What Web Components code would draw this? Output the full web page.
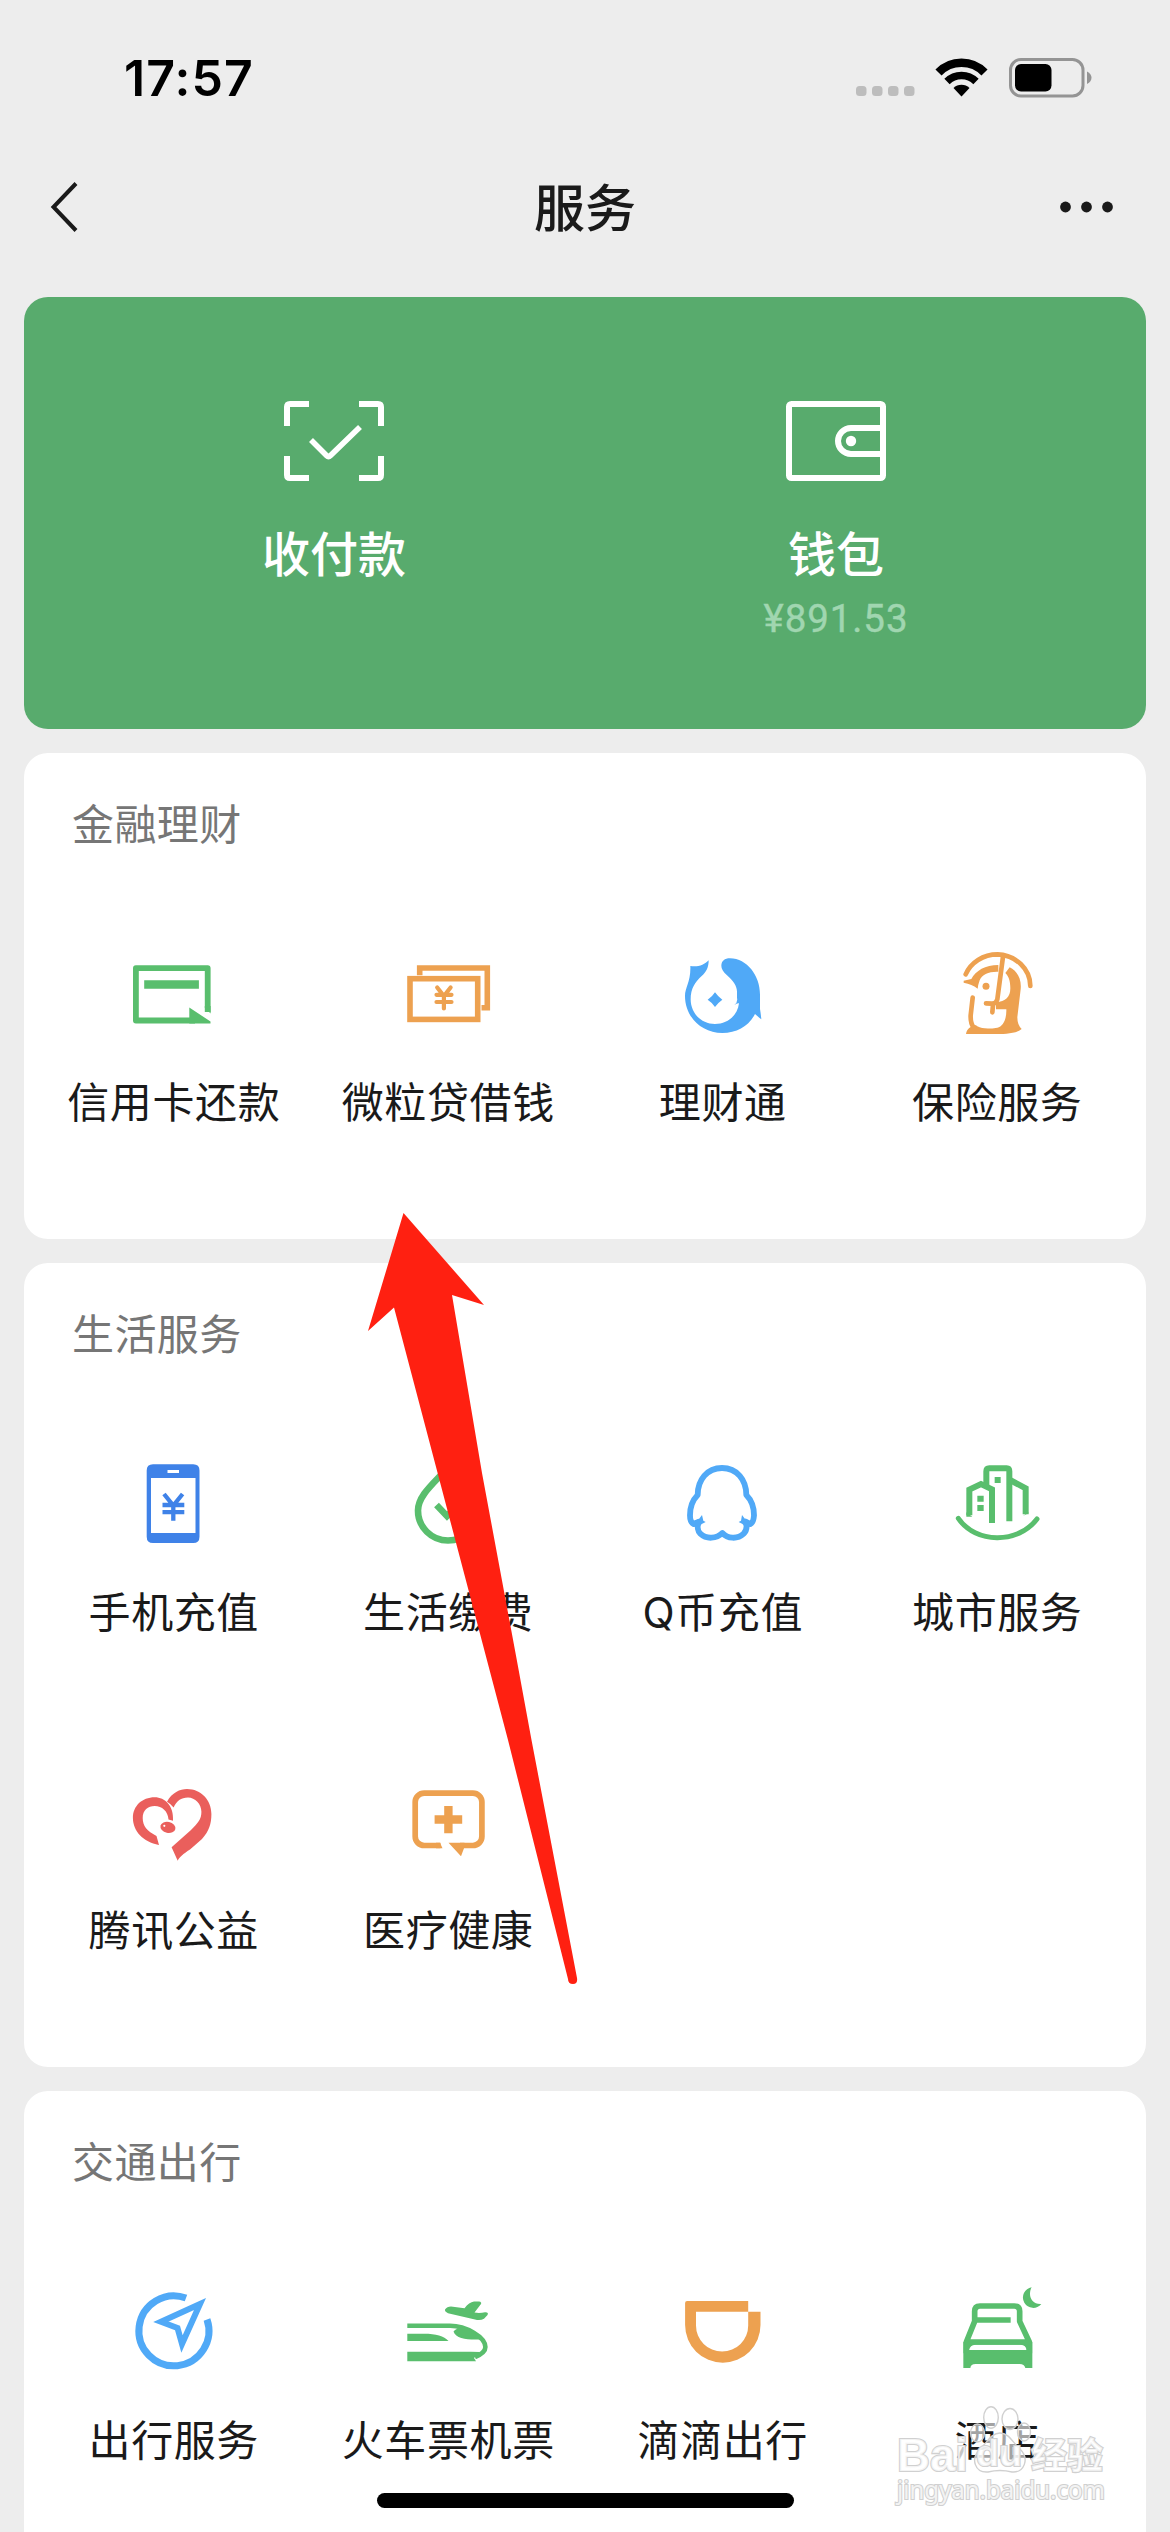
<!DOCTYPE html>
<html lang="zh-CN">
<head>
<meta charset="utf-8">
<title>服务</title>
<style>
  html, body { margin: 0; background: #ededed; }
  body { width: 1170px; height: 2532px; overflow: hidden; }
</style>
</head>
<body>
<service-page>
  <status-bar time="17:57"></status-bar>
  <nav-bar>服务</nav-bar>
  <pay-panel>
    <pay-entry icon="scan">收付款</pay-entry>
    <pay-entry icon="wallet" note="¥891.53">钱包</pay-entry>
  </pay-panel>
  <service-section heading="金融理财">
    <service-item icon="card">信用卡还款</service-item>
    <service-item icon="loan">微粒贷借钱</service-item>
    <service-item icon="fund">理财通</service-item>
    <service-item icon="insurance">保险服务</service-item>
  </service-section>
  <service-section heading="生活服务">
    <service-item icon="phone">手机充值</service-item>
    <service-item icon="drop">生活缴费</service-item>
    <service-item icon="penguin">Q币充值</service-item>
    <service-item icon="city">城市服务</service-item>
    <service-item icon="heart">腾讯公益</service-item>
    <service-item icon="medical">医疗健康</service-item>
  </service-section>
  <service-section heading="交通出行">
    <service-item icon="compass">出行服务</service-item>
    <service-item icon="train">火车票机票</service-item>
    <service-item icon="didi">滴滴出行</service-item>
    <service-item icon="hotel">酒店</service-item>
  </service-section>
  <home-indicator slot="overlay"></home-indicator>
  <pointer-arrow slot="overlay"></pointer-arrow>
  <corner-watermark slot="overlay"></corner-watermark>
</service-page>

<script>
const GREEN = '#59be6d', ORANGE = '#eda150', BLUE = '#50a9f7', ROYAL = '#3f82e8', RED = '#ea5f5c';

const ICONS = {
  scan: ['0 0 104 84', `<g fill="none" stroke="#fff" stroke-width="6"><path d="M27 5H8Q5 5 5 8V27M77 5H96Q99 5 99 8V27M27 79H8Q5 79 5 76V57M77 79H96Q99 79 99 76V57"/><path d="M29 41L44.500 56.500Q46.500 58.500 48.500 56.500L78 28" stroke-width="5.600"/></g>`],
  wallet: ['0 0 104 84', `<g fill="none" stroke="#fff" stroke-width="6"><rect x="5" y="5" width="94" height="74" rx="2.500"/><path d="M99 29H67A13 13 0 0 0 67 55H99"/></g><circle cx="67" cy="42" r="5.200" fill="#fff"/>`],
  card: ['0 0 96 96', `<path d="M82.700 66V22.200H10.900V74.500H70" fill="none" stroke="${GREEN}" stroke-width="5.800" stroke-linejoin="round"/><path d="M19.200 34.300H73.900V42.700H19.200ZM64.300 61.500L85.500 75.500V77.400H64.300ZM79.800 62L85.600 67.500V60H79.800Z" fill="${GREEN}"/>`],
  loan: ['0 0 96 96', `<g fill="none" stroke="${ORANGE}" stroke-width="5.600"><rect x="10" y="32.700" width="67.700" height="40.700"/><path d="M19.700 29.200V22H87.300V61.800H81.500"/><path d="M37.200 41.500L43.900 50L50.600 41.500M36.500 48.800H51.500M36.500 56H51.500M43.900 50V62.500" stroke-width="4.200" stroke-linecap="round"/></g>`],
  fund: ['13 18 288 288', `<path fill="${BLUE}" d="M62 78C84 82 104 75 117 61C117 82 110 96 96 108C76 126 63 146 63 178C63 220 95 252 136 252C174 252 204 226 208 190Q202 189 194 195Q205 186 202 174V155C202 138 190 122 172 106C160 95 155 86 155 77C155 63 165 55 181 55C232 56 271 106 271 164V207Q273 218 275 238Q265 230 256 222C238 258 202 279 158 279C95 279 46 230 46 168C46 143 64 124 62 78Z"/><path fill="${BLUE}" d="M136 157Q145 170 158 179Q145 188 136 201Q128 188 114 179Q128 170 136 157Z"/>`],
  insurance: ['836 18 288 288', `<g fill="none" stroke="${ORANGE}" stroke-width="14" stroke-linecap="round"><path d="M886 103C901 68 938 43 982 43C1036 45 1080 87 1080 138"/><path d="M998 50L981 178Q977 192 964 191L947 190M968 195L966 217" stroke-width="14"/><path d="M907 173L901 226Q900 249 910 263"/></g><path fill="${ORANGE}" d="M880 122L903 117C916 92 945 75 984 75V95C956 94 934 103 928 121Q923 135 922 146C909 136 898 131 880 128ZM1018 82C1042 94 1054 118 1051 148L1041 232Q1041 255 1054 267C1036 282 1000 282 970 282H887Q888 268 902 260Q913 251 921 259C936 267 956 267 981 263C998 260 1009 238 1008 208H977V187C1006 184 1020 172 1020 145C1020 123 1015 108 1005 99Z"/><circle cx="947" cy="139" r="10.500" fill="${ORANGE}"/>`],
  phone: ['0 0 96 96', `<path fill="${ROYAL}" fill-rule="evenodd" d="M28 8.300H68.200Q74.500 8.300 74.500 14.600V80.700Q74.500 87 68.200 87H28Q21.700 87 21.700 80.700V14.600Q21.700 8.300 28 8.300ZM26 22V77H70.500V22ZM42.500 14V17H54V14Z"/><path d="M39 38L48.300 49.500L57.600 38M37.500 49H59.300M37.500 56.200H59.300M48.300 49V64.700" fill="none" stroke="${ROYAL}" stroke-width="4.300"/>`],
  drop: ['0 0 96 96', `<g fill="none" stroke="${GREEN}" stroke-width="6.600"><path d="M48 11C38 24 18 38 18 54.500A30 30 0 0 0 78 54.500C78 38 58 24 48 11Z"/><path d="M36.500 49L47 60L62 45"/></g>`],
  penguin: ['13 18 288 288', `<g fill="none" stroke="${BLUE}" stroke-width="17.500" stroke-linejoin="round"><path d="M84 135C84 90 112 54 157 54C202 54 230 90 230 135C244 149 253 171 253 196C252 210 249 219 242 222L228 215C233 230 229 244 222 251C203 269 173 266 158 249C141 266 111 269 92 251C85 244 81 230 88 215L72 222C65 219 61 210 61 196C61 171 70 149 84 135Z"/></g><path fill="${BLUE}" d="M65 216L88 207L97 195L101 212L108 216C94 222 88 228 84 241L75 230ZM248 216L226 207L217 195L214 212L207 216C221 222 226 228 230 241L240 230Z"/>`],
  city: ['836 18 288 288', `<g fill="none" stroke="${GREEN}" stroke-width="18"><path d="M864 205C915 281 1043 283 1100 207" stroke-linecap="round" stroke-width="15"/><path d="M948 106V64Q948 55 957 55H1009Q1017 55 1017 64V214"/><path d="M897 196V119L932 102L965 118V219"/><path d="M1019 90L1066 115V193"/></g><path fill="${GREEN}" d="M973 81H991V99H973ZM921 137H940V155H921ZM921 165H940V183H921ZM888 187L906 200H888ZM1058 198L1074 186V190Z"/>`],
  heart: ['0 0 96 96', `<g fill="${RED}"><path d="M42 27.700C47 18.500 55 15 62 15C76 15 86.400 26 86.400 40C86.400 50 84 57 77 65L65 75.500C58 80 54.500 83 52.700 86.700L46.600 73.300L66 56C73 49 76.500 45 76.400 37.700C76.400 30 70 23.500 63 23.500C56 23.500 51.500 27 48.600 33.500Q46 30 42 27.700Z"/><path d="M48 46.700C49 32 40 23.300 29.700 23.300C17 23.300 7.900 32 7.900 44C8 57 18 68 34 71L31.500 62C22 57 17.700 52 17.700 44C17.700 36 23 31.900 29.700 31.900C37 32 43 37 43.500 45.500Z"/><ellipse cx="43" cy="53.400" rx="7.600" ry="5.500" transform="rotate(12 43 53)"/></g><circle cx="39.300" cy="51.800" r="1.100" fill="#fff"/>`],
  medical: ['0 0 96 96', `<path d="M40.500 71.500H24.200A9 9 0 0 1 15.200 62.500V28.100A9 9 0 0 1 24.200 19.100H72.900A9 9 0 0 1 81.900 28.100V62.500A9 9 0 0 1 72.900 71.500H60" fill="none" stroke="${ORANGE}" stroke-width="5.700"/><path fill="${ORANGE}" d="M44.200 32H52.600V41.300H62.200V49.700H52.600V59.300H44.200V49.700H34.600V41.300H44.200ZM48.500 68.700H64.500L64 74.300L61 82.300ZM40 68.700L42.500 74.300H36V68.700Z"/>`],
  compass: ['0 0 96 96', `<g fill="none" stroke="${BLUE}"><path d="M61 14A35 35 0 1 0 82 35.500" stroke-width="7"/><path d="M75 20L36 37.700L52.500 44L57 60Z" stroke-width="6"/></g>`],
  train: ['0 0 96 96', `<path d="M7.300 41.800H50C66 41.800 85.400 53 85.400 63C85.400 68.500 80 71 75 73" fill="none" stroke="${GREEN}" stroke-width="4.600"/><path fill="${GREEN}" d="M7.300 49.700H24C36 49.700 44 52 48.500 57H7.300ZM7.300 67.700H71L80 68L74 74L76 77.200H7.300ZM55 46Q60 42 66 44Q74 48 80 55.500C68 56 56 55 53.500 47.500ZM45 25.600Q47 22.500 51 22.400L64.500 24.200Q69 18.300 74 17.500H79Q82 18 81 20L74.500 28.600Q80 29.500 85 28.200Q89 28 87.500 31L84 34.700Q80 37 75 35.400L48 29.200Q44.500 27.700 45 25.600Z"/>`],
  didi: ['0 0 96 96', `<path fill="${ORANGE}" d="M13.100 16.900H74.200V27.700H22V41.500A26.100 26.100 0 0 0 74.200 41.500V27.700H86.500V41A37.700 37.700 0 0 1 11.100 41V18.900Q11.100 16.900 13.100 16.900Z"/>`],
  hotel: ['206 42 288 288', `<g fill="none" stroke="${GREEN}" stroke-width="17"><path d="M258 250V216L283 154V124Q283 108 299 108H402Q418 108 418 124V154L447 216V250M283 150H391M262 216H443" stroke-linejoin="round"/></g><path fill="${GREEN}" fill-rule="evenodd" d="M249 216H456V294H435Q432 282 418 282H286Q271 282 270 294H249ZM266 240H439Q437 225 421 224H285Q269 225 266 240ZM454 52A31 31 0 1 0 483 102C462 104 449 88 449 72C449 64 451 57 454 52Z"/>`]
};

const define = (name, render) => customElements.define(name, class extends HTMLElement {
  constructor() { super(); this.attachShadow({ mode: 'open' }); }
  connectedCallback() { this.shadowRoot.innerHTML = render(this); }
});

define('line-icon', el => {
  const [box, art] = ICONS[el.getAttribute('name')];
  return `<style>:host{display:block;flex:none}svg{display:block;width:100%;height:100%}</style><svg viewBox="${box}" aria-hidden="true">${art}</svg>`;
});

define('service-page', () => `<style>
  :host{display:block;position:relative;width:1170px;height:2532px;overflow:hidden;background:#ededed;color:#1a1a1a;font-family:Inter,"Noto Sans CJK SC",sans-serif}
  main{display:flex;flex-direction:column}
</style><main><slot></slot></main><slot name="overlay"></slot>`);

define('status-bar', el => `<style>
  :host{display:flex;box-sizing:border-box;height:141px;padding:15px 74px 0 124px;align-items:center;justify-content:space-between;color:#000}
  time{font:600 50px/60px Inter,sans-serif;letter-spacing:1.100px}
  svg{display:block}
</style><time>${el.getAttribute('time')}</time>
<svg width="242" height="48" viewBox="854 54 242 48" aria-hidden="true">
  <g fill="#bdbdbd"><rect x="856" y="86" width="10.500" height="10" rx="3.500"/><rect x="872" y="86" width="10.500" height="10" rx="3.500"/><rect x="888" y="86" width="10.500" height="10" rx="3.500"/><rect x="904" y="86" width="10.500" height="10" rx="3.500"/></g>
  <g fill="none" stroke="#000"><path d="M938.500 72.500A32 32 0 0 1 984.500 72.500" stroke-width="8.500"/><path d="M947 81.500A20.500 20.500 0 0 1 976 81.500" stroke-width="7.500"/></g>
  <path d="M961.500 96.500L953.500 88A11.500 11.500 0 0 1 969.500 88Z"/>
  <rect x="1010.500" y="59.500" width="72.500" height="36.500" rx="10.500" fill="none" stroke="#949494" stroke-width="3"/>
  <rect x="1015" y="64" width="36.500" height="27.500" rx="6"/>
  <path d="M1087 71.500Q1091.500 74 1091.500 77.700T1087 84Z" fill="#949494"/>
</svg>`);

define('nav-bar', () => `<style>
  :host{display:grid;grid-template-columns:1fr auto 1fr;align-items:center;box-sizing:border-box;height:132px;padding:0 50px;margin-bottom:24px}
  svg{display:block}svg:last-child{justify-self:end}
  h1{margin:0;padding-top:3px;font-size:51px;line-height:72px;font-weight:500}
</style>
<svg width="30" height="54" viewBox="0 0 30 54" aria-hidden="true"><path d="M26 3.500L3.500 27L26 50.500" fill="none" stroke="#1a1a1a" stroke-width="4"/></svg>
<h1><slot></slot></h1>
<svg width="64" height="12" viewBox="0 0 64 12" fill="#1a1a1a" aria-hidden="true"><circle cx="9.500" cy="6" r="5.400"/><circle cx="30.500" cy="6" r="5.400"/><circle cx="51.500" cy="6" r="5.400"/></svg>`);

define('pay-panel', () => `<style>
  :host{display:grid;grid-template-columns:502px 502px;justify-content:center;box-sizing:border-box;height:432px;margin:0 24px 24px;padding-top:102px;border-radius:24px;background:#58ab6d;color:#fff}
</style><slot></slot>`);

define('pay-entry', el => `<style>
  :host{display:flex;flex-direction:column;align-items:center}
  line-icon{width:104px;height:84px}
  .label{margin-top:39px;font-size:48px;line-height:66px;font-weight:500}
  .note{margin-top:6px;font:400 38.500px/50px Roboto,sans-serif;letter-spacing:.900px;color:#a0d6b0;-webkit-text-stroke:.4px #a0d6b0}
</style><line-icon name="${el.getAttribute('icon')}"></line-icon><span class="label"><slot></slot></span>${el.hasAttribute('note') ? `<span class="note">${el.getAttribute('note')}</span>` : ''}`);

define('service-section', el => `<style>
  :host{display:block;box-sizing:border-box;margin:0 24px 24px;padding:0 12px 48px;border-radius:24px;background:#fff}
  h2{box-sizing:border-box;margin:0;height:120px;padding:42px 36px 0;font-size:42px;line-height:60px;font-weight:400;letter-spacing:.400px;color:#767676}
  .grid{display:grid;grid-template-columns:repeat(4,1fr);grid-auto-rows:318px}
</style><h2>${el.getAttribute('heading')}</h2><div class="grid"><slot></slot></div>`);

define('service-item', el => `<style>
  :host{display:flex;flex-direction:column;align-items:center;padding-top:73px}
  line-icon{width:96px;height:96px}
  span{margin-top:31px;padding-left:1px;font-size:42px;line-height:60px;letter-spacing:.600px;white-space:nowrap}
</style><line-icon name="${el.getAttribute('icon')}"></line-icon><span><slot></slot></span>`);

define('home-indicator', () => `<style>
  :host{display:block;position:absolute;left:377px;top:2493px;width:417px;height:15px;border-radius:8px;background:#000}
</style>`);

define('pointer-arrow', () => `<style>
  :host{display:block;position:absolute;left:360px;top:1205px;width:225px;height:785px}svg{display:block}
</style><svg width="225" height="785" viewBox="360 1205 225 785" aria-hidden="true">
<path fill="#ff2011" d="M403.500 1213L484 1305L452 1295L482 1473L516.800 1660L531.500 1740L577 1978Q578 1984 573 1984T568 1979L508 1740L394 1307.500L368 1331Z"/></svg>`);

define('corner-watermark', () => `<style>
  :host{display:block;position:absolute;left:890px;top:2400px;width:230px;height:120px}svg{display:block}
  text{fill:#fff;fill-opacity:.75;stroke:#d0d0d0;stroke-width:2.200px;paint-order:stroke}
</style><svg width="230" height="120" viewBox="890 2400 230 120">
<g fill="#fff" fill-opacity=".6" stroke="#d0d0d0" stroke-width="1.400">
<ellipse cx="991" cy="2417.500" rx="7.300" ry="10.700"/><ellipse cx="1010" cy="2419" rx="8" ry="10.500"/><ellipse cx="977.500" cy="2433" rx="7" ry="9"/><ellipse cx="1024" cy="2432" rx="6.500" ry="9"/>
<path d="M1000 2433C1009 2433 1013 2443 1020 2449C1030 2459 1024 2473 1012 2472Q1000 2469 988 2472C975 2473 970 2459 980 2449C987 2443 991 2433 1000 2433Z"/></g>
<text x="897" y="2471" font-family="Liberation Sans" font-weight="700" font-size="47" textLength="71" lengthAdjust="spacingAndGlyphs">Bai</text>
<text x="976" y="2466" font-family="Liberation Sans" font-weight="700" font-size="36" textLength="46" lengthAdjust="spacingAndGlyphs">du</text>
<text x="1031" y="2469" font-family="Noto Sans CJK SC" font-weight="700" font-size="36" textLength="72">经验</text>
<text x="897" y="2499" font-family="Noto Sans, sans-serif" font-size="25" textLength="208" lengthAdjust="spacingAndGlyphs">jingyan.baidu.com</text>
</svg>`);
</script>
</body>
</html>
